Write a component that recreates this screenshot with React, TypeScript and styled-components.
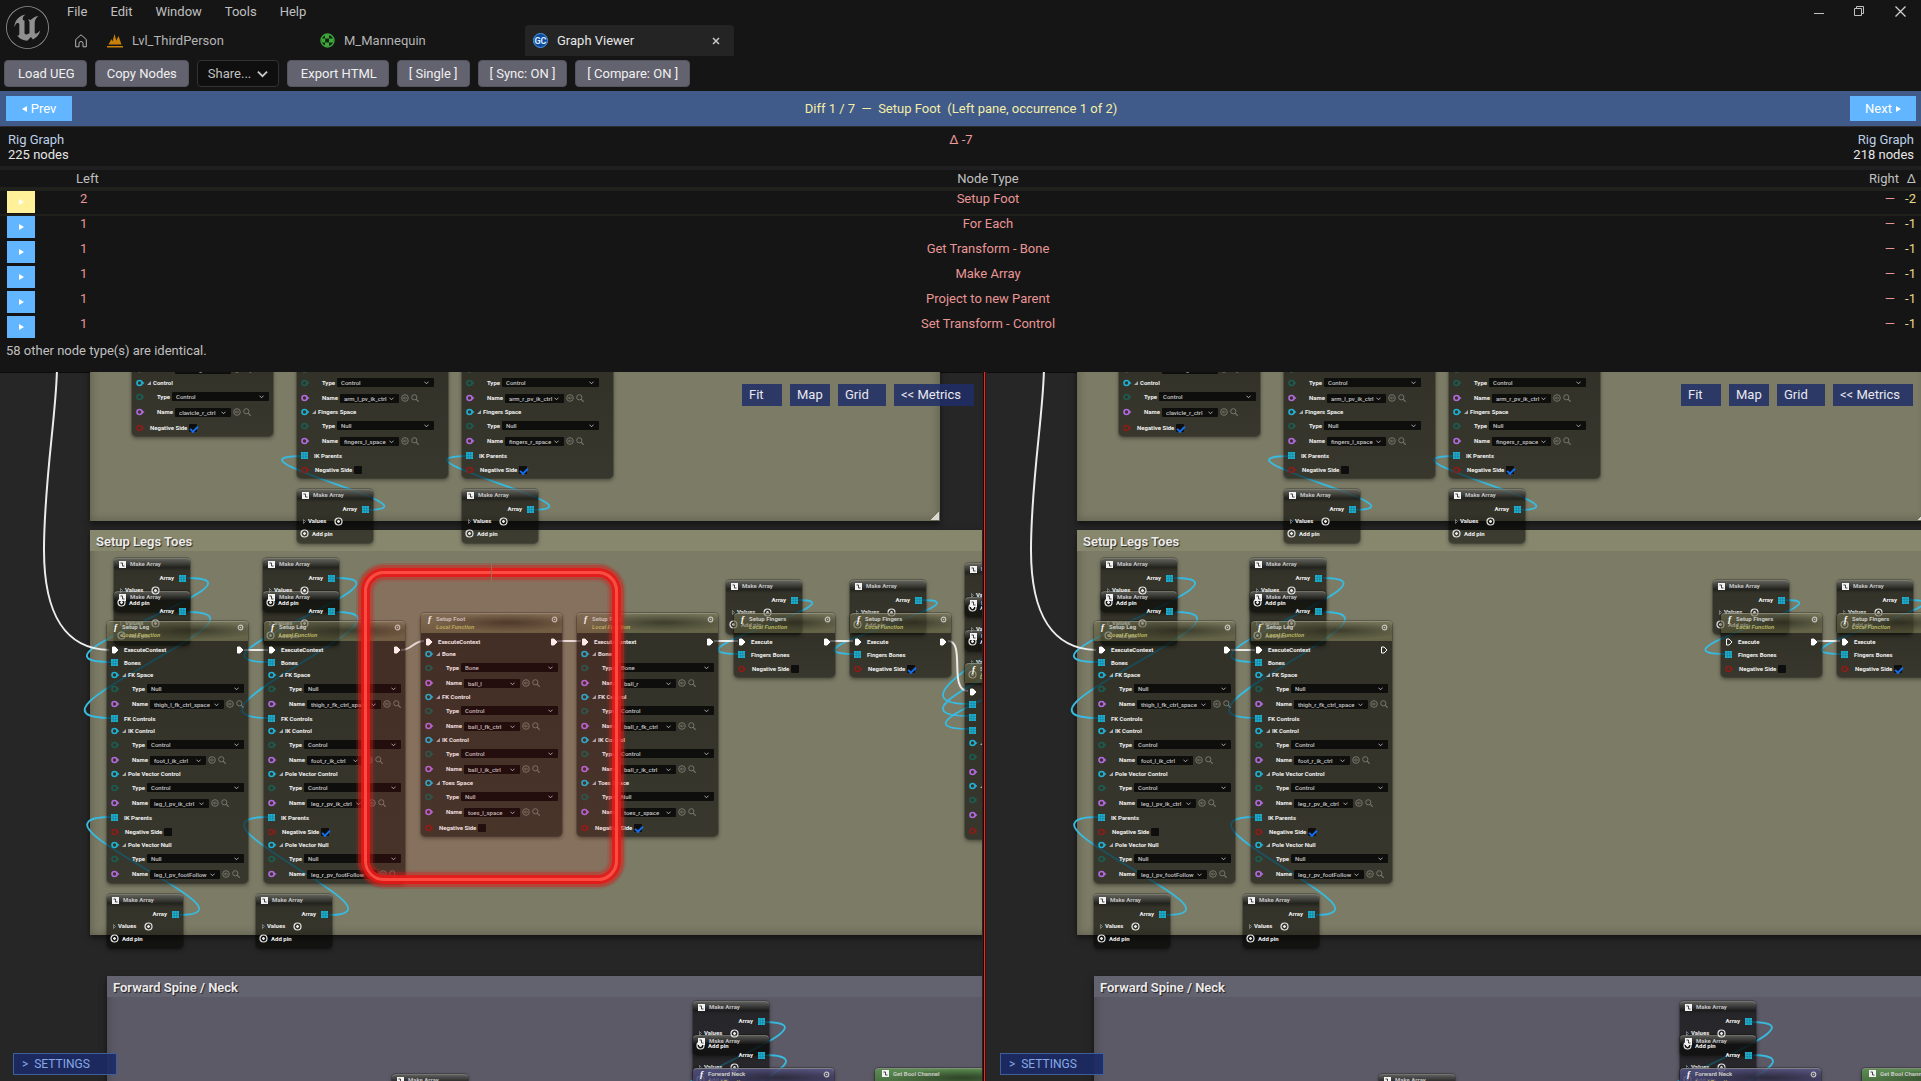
import React from "react";
import styled, { createGlobalStyle, css } from "styled-components";
import { SiUnrealengine } from "react-icons/si";

const GlobalStyle = createGlobalStyle`
  * { box-sizing: border-box; }
  html, body, #root { height: 100%; }
  body {
    margin: 0;
    overflow: hidden;
    background: #151515;
    color: #c0c0c0;
    font: 13px/16px Roboto, "Liberation Sans", sans-serif;
  }
  button, select, input { font: inherit; color: inherit; margin: 0; }
  button { cursor: pointer; }
`;

const Shell = styled.div`
  display: flex;
  flex-direction: column;
  height: 100vh;
`;

/* ---------- title bar ---------- */

const TitleBar = styled.header`
  display: flex;
  height: 56px;
`;

const Logo = styled.div`
  width: 55px;
  padding: 6px 0 0 6px;
  color: #8f8f8f;
  font-size: 43px;
  line-height: 0;
`;

const TitleMain = styled.div`
  flex: 1;
  display: flex;
  flex-direction: column;
`;

const MenuBar = styled.nav`
  display: flex;
  height: 23px;
  margin-bottom: 2px;
  padding-left: 1px;
  align-items: center;
`;

const MenuItem = styled.button`
  border: 0;
  background: none;
  padding: 0 12px 0 11px;
`;

const Spacer = styled.div`
  flex: 1;
`;

const WindowButton = styled.button`
  display: grid;
  place-items: center;
  width: 41px;
  height: 23px;
  padding: 0;
  border: 0;
  background: none;
`;

const TabStrip = styled.div`
  display: flex;
  height: 31px;
  align-items: stretch;
  padding-left: 20px;
`;

const HomeButton = styled.button`
  display: flex;
  align-items: center;
  width: 24px;
  padding: 0;
  border: 0;
  background: none;
`;

const Tab = styled.button<{ $active?: boolean }>`
  display: flex;
  align-items: center;
  gap: 9px;
  width: 209px;
  margin-right: 4px;
  padding: 0 8px;
  border: 0;
  border-radius: 4px 4px 0 0;
  text-align: left;
  background: ${(p) => (p.$active ? "#242424" : "none")};
  color: ${(p) => (p.$active ? "#e6e6e6" : "#b4b4b4")};
  svg { flex: none; }
  span { flex: 1; }
`;

/* ---------- toolbar ---------- */

const Toolbar = styled.div`
  display: flex;
  gap: 8px;
  height: 35px;
  padding: 4px;
`;

const ToolButton = styled.button<{ $wide?: boolean }>`
  height: 27px;
  padding: ${(p) => (p.$wide ? "0 11px 0 13px" : "0 11px")};
  border: 1px solid #55545f;
  border-radius: 4px;
  background: #63626f;
  color: #f0f0f0;
`;

const ShareBox = styled.label`
  display: flex;
  align-items: center;
  position: relative;
  svg { position: absolute; right: 11px; pointer-events: none; }
`;

const ShareSelect = styled.select`
  appearance: none;
  width: 82px;
  height: 27px;
  padding: 0 10px;
  border: 1px solid #333;
  border-radius: 4px;
  background: #0f0f0f;
`;

/* ---------- diff bar and report ---------- */

const DiffBar = styled.div`
  display: flex;
  align-items: center;
  justify-content: space-between;
  height: 36px;
  padding: 0 5px 0 6px;
  border-bottom: 1px solid #2a2c30;
  background: #405a8a;
  color: #f4eea6;
  white-space: pre;
`;

const StepButton = styled.button`
  display: flex;
  align-items: center;
  justify-content: center;
  gap: 4px;
  width: 66px;
  height: 25px;
  padding: 0;
  border: 0;
  background: #62b6ff;
  color: #fff;
`;

const Report = styled.section`
  height: 245px;
`;

const Summary = styled.div`
  display: grid;
  grid-template-columns: 1fr auto 1fr;
  height: 43px;
  padding: 5px 7px 0 8px;
  border-bottom: 4px solid #1f1f22;
  line-height: 15px;
  p { margin: 0; }
`;

const GraphName = styled.p`
  color: #bccfe6;
`;

const Count = styled.p`
  color: #e6e6e6;
`;

const SideInfo = styled.div<{ $end?: boolean }>`
  text-align: ${(p) => (p.$end ? "right" : "left")};
`;

const Total = styled.p`
  color: #f09a9a;
`;

const DiffTable = styled.table`
  width: 100%;
  table-layout: fixed;
  border-spacing: 0;
  td, th { padding: 0; font-weight: 400; vertical-align: top; text-align: center; }
  th { height: 21px; padding-top: 1px; border-bottom: 4px solid #20201d; }
  th:nth-child(2) { text-align: left; padding-left: 34px; }
  th:nth-child(4), td:nth-child(4) { text-align: right; padding-right: 3px; }
  th:nth-child(5), td:nth-child(5) { text-align: right; padding-right: 5px; }
`;

const DiffRow = styled.tr<{ $current?: boolean }>`
  td {
    height: 25px;
    color: #e89595;
    ${(p) => p.$current && css`border-bottom: 2px solid #20201a;`}
  }
  td:nth-child(1) { text-align: left; padding-left: 7px; }
  td:nth-child(2) { text-align: left; padding-left: 38px; }
  td:nth-child(4) { padding-right: 7px; }
  td:nth-child(5) { color: #ead985; }
`;

const JumpButton = styled.button<{ $current?: boolean }>`
  display: grid;
  place-items: center;
  width: 28px;
  height: 22px;
  padding: 0;
  border: 0;
  background: ${(p) => (p.$current ? "#fff09a" : "#62b6ff")};
  color: #fff;
`;

const Identical = styled.p`
  margin: 2px 0 0 6px;
`;

/* ---------- graph panes ---------- */

const Panes = styled.main`
  flex: 1;
  display: grid;
  grid-template-columns: 982fr 5px 934fr;
  min-height: 0;
`;

const Divider = styled.div`
  background: linear-gradient(90deg, #4a1412 0 1px, #160808 1px 2px, #d6352c 2px 3px, #3a0f0d 3px 4px, #262626 4px);
`;

const Pane = styled.section`
  position: relative;
  isolation: isolate;
  overflow: hidden;
  background: #262626;
  box-shadow: inset 0 1px #0c0c0c;
`;

const PaneTools = styled.div`
  position: absolute;
  z-index: 4;
  top: 12px;
  right: 8px;
  display: flex;
  gap: 8px;
`;

const PaneButton = styled.button<{ $w: number }>`
  width: ${(p) => p.$w}px;
  height: 22px;
  padding: 0 7px;
  border: 0;
  background: rgba(32, 45, 102, 0.86);
  color: #e8e8f0;
  text-align: left;
`;

const SettingsButton = styled.button`
  position: absolute;
  z-index: 4;
  left: 13px;
  bottom: 6px;
  width: 104px;
  height: 22px;
  padding: 0 8px;
  border: 1px solid #3f5f9c;
  background: rgba(28, 42, 102, 0.9);
  color: #86a8e6;
  font-size: 12px;
  text-align: left;
  white-space: pre;
`;

const CommentBox = styled.div<{ $x: number; $y: number; $w: number; $h: number; $body: string }>`
  position: absolute;
  left: ${(p) => p.$x}px;
  top: ${(p) => p.$y}px;
  width: ${(p) => p.$w}px;
  height: ${(p) => p.$h}px;
  background: ${(p) => p.$body};
  box-shadow: inset 0 0 10px rgba(40, 40, 30, 0.4), 0 3px 6px rgba(0, 0, 0, 0.5);
`;

const CommentTitle = styled.h3<{ $bg: string }>`
  margin: 0;
  height: 21px;
  padding: 0 6px;
  background: ${(p) => p.$bg};
  color: #ececec;
  font-size: 13px;
  font-weight: 600;
  line-height: 24px;
  text-shadow: 1px 1px 1px rgba(0, 0, 0, 0.7);
`;

const ResizeGrip = styled.div`
  position: absolute;
  right: 1px;
  bottom: 1px;
  width: 8px;
  height: 8px;
  background: linear-gradient(135deg, transparent 50%, #d8d8d0 50%);
`;

const WireLayer = styled.svg`
  position: absolute;
  inset: 0;
  width: 100%;
  height: 100%;
`;

const nodeText = css`
  color: #f0f0f0;
  font-size: 6px;
  font-weight: 700;
  line-height: 8px;
  white-space: nowrap;
`;

const nodeFill = "linear-gradient(rgba(4, 4, 2, 0.62), rgba(4, 4, 2, 0.57))";

const nodeEdge = css`
  border-radius: 4px;
  box-shadow: 0 0 0 1px rgba(0, 0, 0, 0.2), 0 2px 4px rgba(0, 0, 0, 0.45);
`;

const NodeBox = styled.div<{ $x: number; $y: number; $w: number }>`
  ${nodeText}
  ${nodeEdge}
  position: absolute;
  z-index: 2;
  left: ${(p) => p.$x}px;
  top: ${(p) => p.$y}px;
  width: ${(p) => p.$w}px;
`;

const NodeRows = styled.div<{ $titled: boolean }>`
  padding: ${(p) => (p.$titled ? "2px 0 1px" : "0 0 1px")};
  border-radius: ${(p) => (p.$titled ? "0 0 4px 4px" : "4px")};
  background: ${nodeFill};
`;

/* Stacked array nodes share one layer for their bodies and one, above it, for their text. */
const ArrayBody = styled.div<{ $x: number; $y: number }>`
  ${nodeText}
  ${nodeEdge}
  position: absolute;
  left: ${(p) => p.$x}px;
  top: ${(p) => p.$y}px;
  width: 76px;
  padding-bottom: 2px;
  background: ${nodeFill};
`;

const ArrayContent = styled.div`
  position: relative;
  z-index: 1;
`;

const tones = {
  olive: ["rgba(112, 110, 80, 0.62)", "rgba(84, 82, 50, 0.62)"],
  purple: ["rgba(84, 82, 130, 0.85)", "rgba(60, 58, 100, 0.85)"],
  green: ["rgba(92, 150, 78, 0.85)", "rgba(60, 100, 50, 0.85)"],
};

const FunctionHeader = styled.div<{ $tone: keyof typeof tones }>`
  display: flex;
  gap: 4px;
  height: 20px;
  padding: 1px 4px 0 7px;
  border-radius: 4px 4px 0 0;
  border-top: 1px solid rgba(170, 170, 155, 0.6);
  background:
    radial-gradient(ellipse at 62% 45%, rgba(15, 15, 10, 0.5), transparent 60%),
    linear-gradient(${(p) => tones[p.$tone].join(", ")});
  color: #cacac4;
`;

const FunctionGlyph = styled.i`
  width: 4px;
  font: italic 700 9px/9px "Liberation Serif", serif;
  color: #fff;
`;

const FunctionTitle = styled.div`
  flex: 1;
  em { display: block; color: #b3b160; }
`;

const Row = styled.div<{ $h: number; $pad?: number; $gap?: number }>`
  display: flex;
  align-items: center;
  gap: ${(p) => p.$gap ?? 5}px;
  height: ${(p) => p.$h}px;
  padding-left: ${(p) => p.$pad ?? 4}px;
  padding-right: 4px;
  svg { flex: none; }
`;

const Grow = styled.span<{ $end?: boolean }>`
  flex: 1;
  text-align: ${(p) => (p.$end ? "right" : "left")};
`;

const Field = styled.label<{ $left: number }>`
  display: flex;
  align-items: center;
  gap: 2px;
  margin-left: ${(p) => p.$left}px;
`;

const FieldName = styled.span`
  width: 16px;
  text-align: right;
`;

const Picker = styled.span`
  position: relative;
  display: flex;
  align-items: center;
  svg { position: absolute; right: 5px; pointer-events: none; }
`;

const NodeSelect = styled.select<{ $w: number }>`
  appearance: none;
  width: ${(p) => p.$w}px;
  height: 9px;
  padding: 0 4px;
  border: 0;
  border-radius: 1px;
  background: rgba(10, 10, 10, 0.9);
  color: #c4c4c4;
  font-weight: 500;
  line-height: 9px;
`;

const Tick = styled.input`
  appearance: none;
  width: 8px;
  height: 8px;
  border-radius: 1px;
  background: #0e0e0e;
  &:checked::before {
    content: "";
    display: block;
    width: 6px;
    height: 3px;
    margin: 2px 1px;
    border-left: 2px solid #1270f0;
    border-bottom: 2px solid #1270f0;
    transform: rotate(-45deg);
  }
`;

const ArrayHeader = styled.div`
  display: flex;
  align-items: center;
  height: 13px;
  padding: 0 0 2px 5px;
  border-radius: 4px 4px 0 0;
  border-top: 1px solid rgba(170, 170, 160, 0.6);
  background: linear-gradient(rgba(130, 130, 125, 0.6), rgba(20, 20, 20, 0.5) 70%, transparent);
  color: #c0c0c0;
`;

const ArrayTitle = styled(ArrayContent)`
  display: flex;
  align-items: center;
  gap: 4px;
`;

const Highlight = styled.div<{ $x: number; $y: number; $w: number; $h: number }>`
  position: absolute;
  z-index: 3;
  left: ${(p) => p.$x}px;
  top: ${(p) => p.$y}px;
  width: ${(p) => p.$w}px;
  height: ${(p) => p.$h}px;
  border: 3px solid #ff4a42;
  border-radius: 20px;
  background: rgba(255, 20, 20, 0.09);
  box-shadow:
    0 0 0 3px rgba(232, 24, 22, 0.88), inset 0 0 0 3px rgba(232, 24, 22, 0.88),
    0 0 0 6px rgba(220, 30, 25, 0.45), inset 0 0 0 6px rgba(220, 30, 25, 0.35),
    0 0 0 8px rgba(200, 30, 25, 0.2), inset 0 0 0 8px rgba(200, 30, 25, 0.12);
  &::before {
    content: "";
    position: absolute;
    left: 50%;
    top: -11px;
    width: 1px;
    height: 19px;
    background: #8a7460;
  }
`;

/* ---------- small drawings ---------- */

const CYAN = "#1fb0d2";
const WIRE = "#38bbe0";

const ExecPin = ({ hollow }: { hollow?: boolean }) => (
  <svg width="8" height="8" viewBox="0 0 8 8" fill={hollow ? "none" : "#fff"} stroke="#fff">
    <path d="M1.500 1h2.600L7 4 4.100 7H1.500z" />
  </svg>
);

const ArrayPin = () => (
  <svg width="7" height="7" viewBox="0 0 7 7">
    <rect width="7" height="7" fill={CYAN} />
    <path d="M2.300 0v7M4.700 0v7M0 2.300h7M0 4.700h7" stroke="#14788e" strokeWidth=".5" />
  </svg>
);

const DotPin = ({ color }: { color: string }) => (
  <svg width="9" height="8" viewBox="0 0 9 8">
    <circle cx="3.500" cy="4" r="2.500" fill="none" stroke={color} strokeWidth="1.600" />
    <path d="M6 2.200 8.500 4 6 5.800z" fill={color} />
  </svg>
);

const Chevron = ({ size }: { size: number }) => (
  <svg width={size} height={size} viewBox="0 0 12 12" fill="none" stroke="#c8c8c8" strokeWidth="2">
    <path d="m1 4 5 5 5-5" />
  </svg>
);

const Caret = () => (
  <svg width="4" height="4" viewBox="0 0 4 4">
    <path d="M4 0v4H0z" fill="#aaa" />
  </svg>
);

const PlusRing = () => (
  <svg width="9" height="9" viewBox="0 0 9 9" fill="none" stroke="#e6e6e6">
    <circle cx="4.500" cy="4.500" r="3.500" strokeWidth="1.200" />
    <path d="M4.500 3v3M3 4.500h3" strokeWidth="1.300" />
  </svg>
);

const UseIcon = () => (
  <svg width="8" height="8" viewBox="0 0 8 8" fill="none" stroke="#77776f">
    <circle cx="4" cy="4" r="3.300" />
    <path d="M6 4H2.500M4 2.500 2.500 4 4 5.500" strokeWidth=".9" />
  </svg>
);

const FindIcon = () => (
  <svg width="8" height="8" viewBox="0 0 8 8" fill="none" stroke="#77776f">
    <circle cx="3.300" cy="3.300" r="2.600" />
    <path d="m5.300 5.300 2.400 2.400" strokeWidth="1.200" />
  </svg>
);

const ArrayIcon = () => (
  <svg width="7" height="7" viewBox="0 0 7 7">
    <rect width="7" height="7" fill="#f2f2f2" />
    <path d="M1.500 2h2v3h2" fill="none" stroke="#333" strokeWidth=".9" />
  </svg>
);

const RingIcon = () => (
  <svg width="7" height="8" viewBox="0 0 7 8">
    <circle cx="3.500" cy="4.500" r="2.300" fill="none" stroke="#c4c4bc" strokeWidth="1.200" />
    <circle cx="3.500" cy="4.500" r=".8" fill="#c4c4bc" />
  </svg>
);

const Arrow = ({ left }: { left?: boolean }) => (
  <svg width="5" height="6" viewBox="0 0 5 6" fill="#fff">
    <path d={left ? "M5 0v6L0 3z" : "M0 0v6l5-3z"} />
  </svg>
);

/* ---------- node model ---------- */

type RowSpec =
  | { k: "exec"; label: string; hollowIn?: boolean; hollowOut?: boolean }
  | { k: "array"; label: string }
  | { k: "struct"; label: string }
  | { k: "type"; value: string }
  | { k: "name"; value: string; w?: number }
  | { k: "bool"; on?: boolean };

const group = (label: string, type: string, name: string, w?: number): RowSpec[] => [
  { k: "struct", label },
  { k: "type", value: type },
  { k: "name", value: name, w },
];

function NodeRow({ row }: { row: RowSpec }) {
  switch (row.k) {
    case "exec":
      return (
        <Row $h={13}>
          <ExecPin hollow={row.hollowIn} />
          <Grow>{row.label}</Grow>
          <ExecPin hollow={row.hollowOut} />
        </Row>
      );
    case "array":
      return (
        <Row $h={13} $gap={6}>
          <ArrayPin />
          {row.label}
        </Row>
      );
    case "struct":
      return (
        <Row $h={12} $gap={2}>
          <DotPin color={CYAN} />
          <Caret />
          {row.label}
        </Row>
      );
    case "type":
      return (
        <Row $h={15}>
          <DotPin color="#1c5c50" />
          <Field $left={4}>
            <FieldName>Type</FieldName>
            <Picker>
              <NodeSelect $w={97}>
                <option>{row.value}</option>
              </NodeSelect>
              <Chevron size={5} />
            </Picker>
          </Field>
        </Row>
      );
    case "name":
      return (
        <Row $h={16} $gap={2}>
          <DotPin color="#b268dc" />
          <Field $left={10}>
            <FieldName>Name</FieldName>
            <Picker>
              <NodeSelect $w={row.w ?? 56}>
                <option>{row.value}</option>
              </NodeSelect>
              <Chevron size={5} />
            </Picker>
          </Field>
          <UseIcon />
          <FindIcon />
        </Row>
      );
    case "bool":
      return (
        <Row $h={15} $gap={5}>
          <DotPin color="#8c1c18" />
          <Field $left={0}>
            Negative Side
            <Tick type="checkbox" defaultChecked={row.on} />
          </Field>
        </Row>
      );
  }
}

const VIEW_TOP = 372;

type FunctionSpec = {
  x: number;
  y: number;
  w: number;
  title?: string;
  tone?: keyof typeof tones;
  rows: RowSpec[];
};

function FunctionNode({ x, y, w, title, tone = "olive", rows }: FunctionSpec) {
  return (
    <NodeBox $x={x} $y={y - VIEW_TOP} $w={w}>
      {title && (
        <FunctionHeader $tone={tone}>
          {tone === "green" ? <ArrayIcon /> : <FunctionGlyph>f</FunctionGlyph>}
          <FunctionTitle>
            {title}
            {tone !== "green" && <em>Local Function</em>}
          </FunctionTitle>
          <RingIcon />
        </FunctionHeader>
      )}
      <NodeRows $titled={Boolean(title)}>
        {rows.map((row, i) => (
          <NodeRow key={i} row={row} />
        ))}
      </NodeRows>
    </NodeBox>
  );
}

function MakeArray({ x, y }: { x: number; y: number }) {
  return (
    <ArrayBody $x={x} $y={y - VIEW_TOP}>
      <ArrayHeader>
        <ArrayTitle>
          <ArrayIcon />
          Make Array
        </ArrayTitle>
      </ArrayHeader>
      <ArrayContent>
        <Row $h={14} $gap={5}>
          <Grow $end>Array</Grow>
          <ArrayPin />
        </Row>
        <Row $h={10} $pad={6} $gap={2}>
          <svg width="3" height="5" viewBox="0 0 3 5" fill="none" stroke="#999" strokeWidth=".7">
            <path d="M.5.500v4l2-2z" />
          </svg>
          Values
          <Field $left={6}>
            <PlusRing />
          </Field>
        </Row>
        <Row $h={15} $pad={3} $gap={3}>
          <PlusRing />
          Add pin
        </Row>
      </ArrayContent>
    </ArrayBody>
  );
}

const legRows = (s: "l" | "r", hollowOut?: boolean): RowSpec[] => [
  { k: "exec", label: "ExecuteContext", hollowOut },
  { k: "array", label: "Bones" },
  ...group("FK Space", "Null", `thigh_${s}_fk_ctrl_space`, 74),
  { k: "array", label: "FK Controls" },
  ...group("IK Control", "Control", `foot_${s}_ik_ctrl`),
  ...group("Pole Vector Control", "Control", `leg_${s}_pv_ik_ctrl`, 59),
  { k: "array", label: "IK Parents" },
  { k: "bool", on: s === "r" },
  ...group("Pole Vector Null", "Null", `leg_${s}_pv_footFollow`, 70),
];

const footRows = (s: "l" | "r"): RowSpec[] => [
  { k: "exec", label: "ExecuteContext" },
  ...group("Bone", "Bone", `ball_${s}`),
  ...group("FK Control", "Control", `ball_${s}_fk_ctrl`),
  ...group("IK Control", "Control", `ball_${s}_ik_ctrl`),
  ...group("Toes Space", "Null", `toes_${s}_space`),
  { k: "bool", on: s === "r" },
];

const armRows = (s: "l" | "r"): RowSpec[] => [
  ...group("Pole Vector Control", "Control", `arm_${s}_pv_ik_ctrl`, 59),
  ...group("Fingers Space", "Null", `fingers_${s}_space`, 59),
  { k: "array", label: "IK Parents" },
  { k: "bool", on: s === "r" },
];

const fingerRows = (on: boolean, hollowIn?: boolean): RowSpec[] => [
  { k: "exec", label: "Execute", hollowIn },
  { k: "array", label: "Fingers Bones" },
  { k: "bool", on },
];

const loop = (x1: number, y1: number, x2: number, y2: number, out: number, back: number) =>
  `M${x1} ${y1}C${x1 + out} ${y1} ${x2 - back} ${y2} ${x2} ${y2}`;

const dataWires = [
  loop(364, 510, 304, 456, 90, 94),
  loop(529, 510, 469, 456, 90, 94),
  loop(187, 578, 112, 662, 98, 108),
  loop(187, 612, 112, 718, 106, 116),
  loop(336, 578, 269, 662, 94, 104),
  loop(336, 612, 269, 718, 100, 112),
  loop(180, 915, 112, 817, 90, 104),
  loop(329, 915, 269, 817, 88, 102),
  loop(798, 600, 739, 654, 70, 86),
  loop(922, 600, 855, 654, 74, 88),
  loop(763, 1022, 698, 1100, 96, 96),
  loop(763, 1055, 698, 1140, 100, 100),
];

const cutWires = [
  loop(1036, 583, 970, 704, 120, 116),
  loop(1036, 617, 970, 716, 120, 116),
  loop(1036, 650, 970, 729, 110, 106),
];

const execCommon = [
  "M57 366C57 410 44 480 44 550C44 615 66 649 109 650",
  "M244 650H268",
  "M830 641H853",
];

const execLeft = [
  "M401 650C412 650 413 641 424 641",
  "M557 641H581",
  "M714 641H738",
  "M948 641C966 641 948 691 968 691",
];

function Graph({ full }: { full?: boolean }) {
  const data = full ? [...dataWires, ...cutWires] : dataWires;
  const exec = full ? [...execCommon, ...execLeft] : execCommon;
  return (
    <Pane>
      <CommentBox $x={90} $y={-40} $w={850} $h={189} $body="#7b7b66">
        <ResizeGrip />
      </CommentBox>
      <CommentBox $x={90} $y={158} $w={1400} $h={405} $body="#7b7b66">
        <CommentTitle $bg="#87876e">Setup Legs Toes</CommentTitle>
      </CommentBox>
      <CommentBox $x={107} $y={604} $w={1400} $h={400} $body="#5b5a66">
        <CommentTitle $bg="#63626f">Forward Spine / Neck</CommentTitle>
      </CommentBox>

      <WireLayer fill="none">
        <g transform={`translate(0 ${-VIEW_TOP})`}>
          {data.map((d) => (
            <path key={d} d={d} stroke={WIRE} strokeWidth="1.800" />
          ))}
          {exec.map((d) => (
            <path key={d} d={d} stroke="#ececec" strokeWidth="2" />
          ))}
        </g>
      </WireLayer>

      <FunctionNode
        x={132}
        y={361}
        w={141}
        rows={[
          { k: "name", value: "clavicle_r" },
          ...group("Control", "Control", "clavicle_r_ctrl"),
          { k: "bool", on: true },
        ]}
      />
      <FunctionNode x={297} y={363} w={151} rows={armRows("l")} />
      <FunctionNode x={462} y={363} w={151} rows={armRows("r")} />
      <MakeArray x={297} y={489} />
      <MakeArray x={462} y={489} />

      <MakeArray x={114} y={558} />
      <MakeArray x={114} y={591} />
      <MakeArray x={263} y={558} />
      <MakeArray x={263} y={591} />
      <FunctionNode x={107} y={621} w={141} title="Setup Leg" rows={legRows("l")} />
      <FunctionNode x={264} y={621} w={141} title="Setup Leg" rows={legRows("r", !full)} />
      <MakeArray x={107} y={894} />
      <MakeArray x={256} y={894} />

      {full && (
        <>
          <FunctionNode x={421} y={613} w={141} title="Setup Foot" rows={footRows("l")} />
          <FunctionNode x={577} y={613} w={141} title="Setup Foot" rows={footRows("r")} />
          <MakeArray x={965} y={563} />
          <MakeArray x={965} y={597} />
          <MakeArray x={965} y={630} />
          <FunctionNode
            x={965}
            y={663}
            w={141}
            title="Setup Spine"
            rows={[
              { k: "exec", label: "Execute" },
              { k: "array", label: "Bones" },
              { k: "array", label: "Controls" },
              { k: "array", label: "Parents" },
              ...group("Space", "Null", "spine"),
              ...group("Space", "Null", "spine"),
              { k: "bool" },
            ]}
          />
        </>
      )}

      <MakeArray x={726} y={580} />
      <MakeArray x={850} y={580} />
      <FunctionNode x={734} y={613} w={101} title="Setup Fingers" rows={fingerRows(false, !full)} />
      <FunctionNode x={850} y={613} w={101} title="Setup Fingers" rows={fingerRows(true)} />

      <MakeArray x={392} y={1074} />
      <MakeArray x={693} y={1001} />
      <MakeArray x={693} y={1035} />
      <FunctionNode x={693} y={1068} w={141} tone="purple" title="Forward Neck" rows={[]} />
      <FunctionNode x={875} y={1068} w={141} tone="green" title="Get Bool Channel" rows={[]} />

      {full && <Highlight $x={364} $y={199} $w={254} $h={310} />}

      <PaneTools>
        <PaneButton $w={40}>Fit</PaneButton>
        <PaneButton $w={40}>Map</PaneButton>
        <PaneButton $w={48}>Grid</PaneButton>
        <PaneButton $w={80}>&lt;&lt; Metrics</PaneButton>
      </PaneTools>
      <SettingsButton>{">  SETTINGS"}</SettingsButton>
    </Pane>
  );
}

/* ---------- page ---------- */

const diffs: [number, string, number][] = [
  [2, "Setup Foot", -2],
  [1, "For Each", -1],
  [1, "Get Transform - Bone", -1],
  [1, "Make Array", -1],
  [1, "Project to new Parent", -1],
  [1, "Set Transform - Control", -1],
];

export default function App() {
  return (
    <Shell>
      <GlobalStyle />
      <TitleBar>
        <Logo>
          <SiUnrealengine />
        </Logo>
        <TitleMain>
          <MenuBar>
            {["File", "Edit", "Window", "Tools", "Help"].map((m) => (
              <MenuItem key={m}>{m}</MenuItem>
            ))}
            <Spacer />
            <WindowButton aria-label="Minimize">
              <svg width="10" height="10" stroke="#c0c0c0">
                <path d="M0 6.500h10" />
              </svg>
            </WindowButton>
            <WindowButton aria-label="Restore">
              <svg width="11" height="11" fill="none" stroke="#c0c0c0">
                <path d="M.5 2.500h7v7h-7zM2.500 2.500v-2h7v7h-2" />
              </svg>
            </WindowButton>
            <WindowButton aria-label="Close">
              <svg width="11" height="11" stroke="#d0d0d0" strokeWidth="1.300">
                <path d="m.5.500 10 10m0-10-10 10" />
              </svg>
            </WindowButton>
          </MenuBar>
          <TabStrip>
            <HomeButton aria-label="Home">
              <svg width="12" height="14" viewBox="0 0 12 14" fill="none" stroke="#b4b4b4">
                <path d="M.7 5.500 6 .8l5.300 4.700v7.300H8V9.500a2 2 0 0 0-4 0v3.300H.7z" />
              </svg>
            </HomeButton>
            <Tab>
              <svg width="16" height="14" viewBox="0 0 16 14" fill="#c8800a">
                <path d="M1.500 10.500 4.500 5l1 2.500L7.500 0l1.800 6.500L11.500 2l3 8.500zM0 12h16v1.600H0z" />
              </svg>
              <span>Lvl_ThirdPerson</span>
            </Tab>
            <Tab>
              <svg width="15" height="15" viewBox="0 0 15 15">
                <circle cx="7.500" cy="7.500" r="6.500" fill="#10240f" stroke="#3fa83a" strokeWidth="1.400" />
                <path d="M5 2h4v3.500H5zM2 5.500h3.200v4H2zM9 5.500h4v4H9zM5 9.500h4V13H5z" fill="#3fa83a" />
              </svg>
              <span>M_Mannequin</span>
            </Tab>
            <Tab $active>
              <svg width="15" height="15" viewBox="0 0 15 15">
                <circle cx="7.500" cy="7.500" r="7" fill="#0d4a9c" stroke="#4d9be8" />
                <text x="7.500" y="10.500" textAnchor="middle" fontSize="9" fontWeight="700" fill="#d8ecff">
                  GC
                </text>
              </svg>
              <span>Graph Viewer</span>
              <svg width="21" height="8" viewBox="0 0 21 8" stroke="#c8c8c8" strokeWidth="1.500">
                <path d="m8 1 6 6m0-6-6 6" />
              </svg>
            </Tab>
          </TabStrip>
        </TitleMain>
      </TitleBar>

      <Toolbar>
        <ToolButton $wide>Load UEG</ToolButton>
        <ToolButton>Copy Nodes</ToolButton>
        <ShareBox>
          <ShareSelect aria-label="Share">
            <option>Share...</option>
          </ShareSelect>
          <Chevron size={11} />
        </ShareBox>
        <ToolButton $wide>Export HTML</ToolButton>
        <ToolButton>[ Single ]</ToolButton>
        <ToolButton>[ Sync: ON ]</ToolButton>
        <ToolButton>[ Compare: ON ]</ToolButton>
      </Toolbar>

      <DiffBar>
        <StepButton>
          <Arrow left />
          Prev
        </StepButton>
        <span>{"Diff 1 / 7  —  Setup Foot  (Left pane, occurrence 1 of 2)"}</span>
        <StepButton>
          Next
          <Arrow />
        </StepButton>
      </DiffBar>

      <Report>
        <Summary>
          <SideInfo>
            <GraphName>Rig Graph</GraphName>
            <Count>225 nodes</Count>
          </SideInfo>
          <Total>Δ -7</Total>
          <SideInfo $end>
            <GraphName>Rig Graph</GraphName>
            <Count>218 nodes</Count>
          </SideInfo>
        </Summary>
        <DiffTable>
          <colgroup>
            <col width="42" />
            <col width="70" />
            <col />
            <col width="38" />
            <col width="19" />
          </colgroup>
          <thead>
            <tr>
              <th />
              <th>Left</th>
              <th>Node Type</th>
              <th>Right</th>
              <th>Δ</th>
            </tr>
          </thead>
          <tbody>
            {diffs.map(([left, name, delta], i) => (
              <DiffRow key={name} $current={i === 0}>
                <td>
                  <JumpButton $current={i === 0} aria-label={`Go to ${name}`}>
                    <Arrow />
                  </JumpButton>
                </td>
                <td>{left}</td>
                <td>{name}</td>
                <td>—</td>
                <td>{delta}</td>
              </DiffRow>
            ))}
          </tbody>
        </DiffTable>
        <Identical>58 other node type(s) are identical.</Identical>
      </Report>

      <Panes>
        <Graph full />
        <Divider />
        <Graph />
      </Panes>
    </Shell>
  );
}
